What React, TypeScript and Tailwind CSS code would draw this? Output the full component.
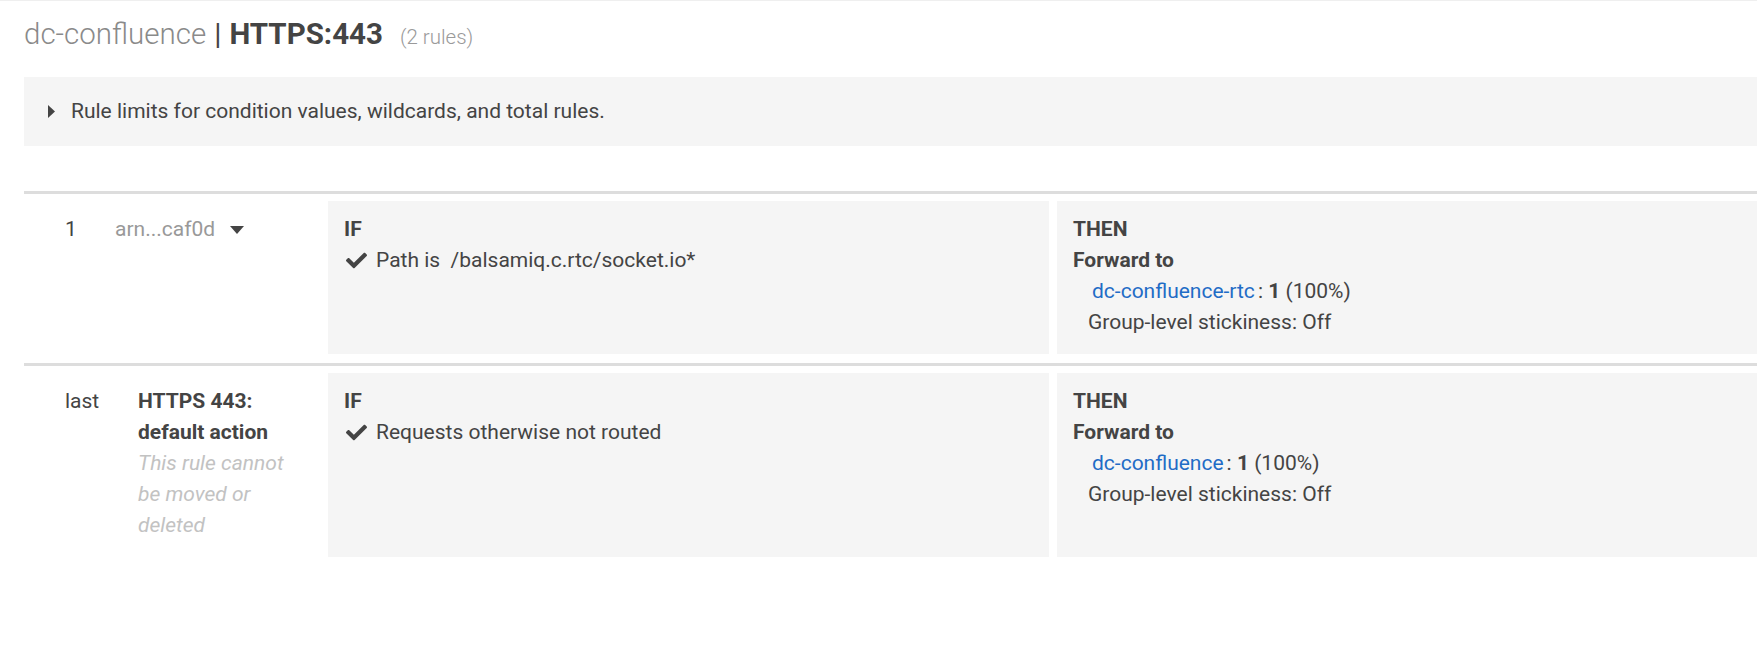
import React from "react";

function Check() {
  return (
    <svg viewBox="0 0 512 512" className="inline-block w-[21px] h-[21px] ml-[2px] mr-[9px] align-[-4px]" fill="#444444">
      <path d="M173.898 439.404l-166.4-166.4c-9.997-9.997-9.997-26.206 0-36.204l36.203-36.204c9.997-9.998 26.207-9.998 36.204 0L192 312.69 432.095 72.596c9.997-9.997 26.207-9.997 36.204 0l36.203 36.204c9.997 9.997 9.997 26.206 0 36.204l-294.4 294.401c-9.998 9.997-26.207 9.997-36.204-.001z" />
    </svg>
  );
}

function ThenCell({ target }: { target: string }) {
  return (
    <div className="flex-1 ml-[8px] bg-[#f5f5f5] pt-[13px] pb-[16px] pl-[16px]">
      <div className="font-bold">THEN</div>
      <div className="font-bold">Forward to</div>
      <div className="pl-[19px]">
        <span className="text-[#1f6cc6]">{target}</span>
        <span className="ml-[3px]">:</span> <span className="font-bold">1</span> (100%)
      </div>
      <div className="pl-[15px]">Group-level stickiness: Off</div>
    </div>
  );
}

function IfCell({ text }: { text: string }) {
  return (
    <div className="w-[721px] bg-[#f5f5f5] pt-[13px] pb-[16px] pl-[16px]">
      <div className="font-bold">IF</div>
      <div className="whitespace-pre">
        <Check />
        {text}
      </div>
    </div>
  );
}

export default function App() {
  return (
    <div className="w-[1757px] h-[658px] overflow-hidden bg-white border-t border-[#efefef] font-['Roboto',sans-serif] text-[#444444]">
      <div className="pl-[24px]">
        <h1 className="pt-[16px] h-[51px] leading-[34px] text-[29.5px] whitespace-nowrap">
          <span className="font-light text-[#8a8a8a]">dc-confluence</span>
          <span className="font-normal ml-[8px]">|</span>
          <span className="font-bold ml-[8px]">HTTPS:443</span>
          <span className="font-light text-[20.5px] leading-none text-[#9a9a9a] ml-[17px]">(2 rules)</span>
        </h1>

        <div className="mt-[25px] bg-[#f5f5f5] py-[19px] pl-[24px] flex items-center text-[21px] leading-[31px]">
          <svg viewBox="0 0 7 13" className="w-[7px] h-[13px] mr-[16px]" fill="#444444">
            <path d="M0 0 L7 6.5 L0 13 Z" />
          </svg>
          <span>Rule limits for condition values, wildcards, and total rules.</span>
        </div>

        <div className="mt-[45px] text-[21px] leading-[31px]">
          <div className="border-t-[3px] border-[#dddddd] pt-[7px] pb-[9px] flex">
            <div className="w-[304px] flex pt-[13px] pl-[41px]">
              <div className="w-[50px]">1</div>
              <div className="flex items-center h-[31px]">
                <span className="text-[#999999]">arn...caf0d</span>
                <svg viewBox="0 0 14 8" className="w-[14px] h-[8px] ml-[15px]" fill="#444444">
                  <path d="M0 0 L14 0 L7 8 Z" />
                </svg>
              </div>
            </div>
            <IfCell text="Path is  /balsamiq.c.rtc/socket.io*" />
            <ThenCell target="dc-confluence-rtc" />
          </div>

          <div className="border-t-[3px] border-[#dddddd] pt-[7px] pb-[9px] flex">
            <div className="w-[304px] flex pt-[13px] pb-[16px] pl-[41px]">
              <div className="w-[73px]">last</div>
              <div className="w-[160px]">
                <div className="font-bold">HTTPS 443: default action</div>
                <div className="italic text-[#c2c2c2]">This rule cannot be moved or deleted</div>
              </div>
            </div>
            <IfCell text="Requests otherwise not routed" />
            <ThenCell target="dc-confluence" />
          </div>
        </div>
      </div>
    </div>
  );
}
